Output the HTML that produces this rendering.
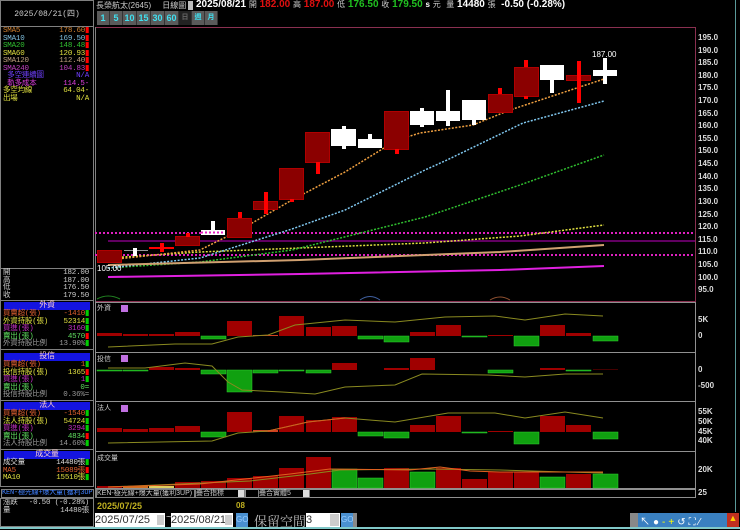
<!DOCTYPE html>
<html><head><meta charset="utf-8"><style>
*{margin:0;padding:0;box-sizing:border-box}
body{width:740px;height:529px;background:#000;overflow:hidden;position:relative;font-family:"Liberation Sans","Noto Sans CJK TC",sans-serif;color:#ddd}
.a{position:absolute;white-space:nowrap}
.lp{font-family:"Liberation Mono","Noto Sans CJK TC",monospace;font-size:7.5px;line-height:7.4px;letter-spacing:-0.2px}
.r{position:absolute;left:3px;width:88px;height:8px}
.r span:last-child{position:absolute;right:2px}
.hd{position:absolute;left:4px;width:86px;height:8px;background:#1414e0;color:#ffd0d0;text-align:center;font-size:8px;line-height:8px}
.box{position:absolute;border:1px solid #808080}
.btn{position:absolute;top:11px;height:14px;width:13px;background:#5a5a5a;color:#40e0f0;font-size:9px;font-weight:bold;text-align:center;line-height:14px;border-right:1px solid #333}
.ax{position:absolute;left:698px;font-size:8px;font-weight:bold;color:#ddd;font-family:"Liberation Sans",sans-serif}
</style></head><body>

<div class="box" style="left:0;top:0;width:94px;height:27px"></div>
<div class="a" style="left:0;top:8px;width:94px;text-align:center;font-size:8px;font-family:'Liberation Mono','Noto Sans CJK TC',monospace;color:#ccc">2025/08/21(四)</div>
<div class="box" style="left:0;top:26px;width:94px;height:243px"></div>
<div class="box" style="left:0;top:268px;width:94px;height:33px"></div>
<div class="box" style="left:0;top:300px;width:94px;height:50px"></div>
<div class="box" style="left:0;top:349px;width:94px;height:52px"></div>
<div class="box" style="left:0;top:400px;width:94px;height:50px"></div>
<div class="box" style="left:0;top:449px;width:94px;height:38px"></div>

<div class="lp">
<div class="r" style="top:28px;color:#d08030"><span>SMA5</span><span>178.60<b style="color:#f00">▮</b></span></div>
<div class="r" style="top:35.5px;color:#80c0e0"><span>SMA10</span><span>169.50<b style="color:#f00">▮</b></span></div>
<div class="r" style="top:43px;color:#30c030"><span>SMA20</span><span>148.48<b style="color:#f00">▮</b></span></div>
<div class="r" style="top:50.5px;color:#e0e040"><span>SMA60</span><span>120.93<b style="color:#f00">▮</b></span></div>
<div class="r" style="top:58px;color:#c0a080"><span>SMA120</span><span>112.40<b style="color:#f00">▮</b></span></div>
<div class="r" style="top:65.5px;color:#c040c0"><span>SMA240</span><span>104.83<b style="color:#f00">▮</b></span></div>
<div class="r" style="top:73px;color:#7040ff"><span>&nbsp;多空連續圖</span><span>N/A</span></div>
<div class="r" style="top:80.5px;color:#e040e0"><span>&nbsp;軌多成本</span><span>114.5-</span></div>
<div class="r" style="top:88px;color:#e0e040"><span>多空均線</span><span>64.04-</span></div>
<div class="r" style="top:95.5px;color:#e0e040"><span>出場</span><span>N/A</span></div>

<div class="r" style="top:270px;color:#ccc"><span>開</span><span>182.00</span></div>
<div class="r" style="top:277.5px;color:#ccc"><span>高</span><span>187.00</span></div>
<div class="r" style="top:285px;color:#ccc"><span>低</span><span>176.50</span></div>
<div class="r" style="top:292.5px;color:#ccc"><span>收</span><span>179.50</span></div>

<div class="hd" style="top:302px">外資</div>
<div class="r" style="top:311px;color:#e06030"><span>買賣超(張)</span><span>-1410<b style="color:#0c0">▮</b></span></div>
<div class="r" style="top:318.5px;color:#e0e040"><span>外資持股(張)</span><span>52314<b style="color:#0c0">▮</b></span></div>
<div class="r" style="top:326px;color:#c030c0"><span>買進(張)</span><span>3160<b style="color:#0c0">▮</b></span></div>
<div class="r" style="top:333.5px;color:#60e060"><span>賣出(張)</span><span>4570<b style="color:#f00">▮</b></span></div>
<div class="r" style="top:341px;color:#999"><span>外資持股比例</span><span>13.90%<b style="color:#0c0">▮</b></span></div>

<div class="hd" style="top:353px">投信</div>
<div class="r" style="top:362px;color:#e06030"><span>買賣超(張)</span><span>1<b style="color:#0c0">▮</b></span></div>
<div class="r" style="top:369.5px;color:#e0e040"><span>投信持股(張)</span><span>1365<b style="color:#f00">▮</b></span></div>
<div class="r" style="top:377px;color:#c030c0"><span>買進(張)</span><span>1<b style="color:#0c0">▮</b></span></div>
<div class="r" style="top:384.5px;color:#60e060"><span>賣出(張)</span><span>0=</span></div>
<div class="r" style="top:392px;color:#999"><span>投信持股比例</span><span>0.36%=</span></div>

<div class="hd" style="top:402px">法人</div>
<div class="r" style="top:411px;color:#e06030"><span>買賣超(張)</span><span>-1540<b style="color:#0c0">▮</b></span></div>
<div class="r" style="top:418.5px;color:#e0e040"><span>法人持股(張)</span><span>54724<b style="color:#0c0">▮</b></span></div>
<div class="r" style="top:426px;color:#c030c0"><span>買進(張)</span><span>3294<b style="color:#0c0">▮</b></span></div>
<div class="r" style="top:433.5px;color:#60e060"><span>賣出(張)</span><span>4834<b style="color:#f00">▮</b></span></div>
<div class="r" style="top:441px;color:#999"><span>法人持股比例</span><span>14.60%<b style="color:#0c0">▮</b></span></div>

<div class="hd" style="top:451px">成交量</div>
<div class="r" style="top:460px;color:#ddd"><span>成交量</span><span>14480張<b style="color:#0c0">▮</b></span></div>
<div class="r" style="top:467.5px;color:#e06030"><span>MA5</span><span>15089張<b style="color:#f00">▮</b></span></div>
<div class="r" style="top:475px;color:#e0e040"><span>MA10</span><span>15510張<b style="color:#0c0">▮</b></span></div>

<div class="a" style="left:1px;top:489px;width:93px;height:9px;border:1px solid #808080;color:#4080ff;font-size:7px;line-height:7px;overflow:hidden">KEN-極光線+爆大量(獲利3UP)</div>
<div class="r" style="top:500px;color:#ccc"><span>漲跌</span><span>-0.50 (-0.28%)</span></div>
<div class="r" style="top:507.5px;color:#ccc"><span>量</span><span>14480張</span></div>
</div>
<div class="box" style="left:0;top:498px;width:94px;height:29px"></div>

<div class="a" style="left:96px;top:0;font-size:8px;color:#ccc">長榮航太(2645) &nbsp;&nbsp;&nbsp;&nbsp;日線圖 <span style="background:#bbb;color:#bbb">▮</span></div>
<div class="a" style="left:196px;top:-1px;font-size:10px;font-weight:bold;color:#fff">2025/08/21 <span style="font-weight:normal;font-size:8px;color:#ccc">開</span> <span style="color:#e01010">182.00</span> <span style="font-weight:normal;font-size:8px;color:#ccc">高</span> <span style="color:#e01010">187.00</span> <span style="font-weight:normal;font-size:8px;color:#ccc">低</span> <span style="color:#20c020">176.50</span> <span style="font-weight:normal;font-size:8px;color:#ccc">收</span> <span style="color:#20c020">179.50</span> <span style="font-size:8px">s</span> <span style="font-weight:normal;font-size:8px;color:#ccc">元</span> &nbsp;<span style="font-weight:normal;font-size:8px;color:#ccc">量</span> 14480 <span style="font-weight:normal;font-size:8px;color:#ccc">張</span> &nbsp;-0.50 (-0.28%)</div>
<div class="btn" style="left:97px">1</div>
<div class="btn" style="left:110px">5</div>
<div class="btn" style="left:123px;width:14px">10</div>
<div class="btn" style="left:137px;width:14px">15</div>
<div class="btn" style="left:151px;width:14px">30</div>
<div class="btn" style="left:165px;width:14px">60</div>
<div class="btn" style="left:179px;background:#222;color:#666;font-size:7px">日</div>
<div class="btn" style="left:192px;font-size:7px">週</div>
<div class="btn" style="left:205px;font-size:7px">月</div>

<svg class="a" style="left:0;top:0" width="740" height="529" xmlns="http://www.w3.org/2000/svg">
<rect x="95.5" y="27.5" width="600" height="274" fill="none" stroke="#8a3050"/>
<line x1="95.5" y1="27" x2="95.5" y2="498" stroke="#808080"/>
<g stroke="#909090" fill="none">
<rect x="95.5" y="302.5" width="600" height="50"/>
<rect x="95.5" y="352.5" width="600" height="49"/>
<rect x="95.5" y="401.5" width="600" height="50"/>
<rect x="95.5" y="451.5" width="600" height="37"/>
<rect x="245.5" y="489.5" width="450" height="8"/>
</g>
<line x1="735.5" y1="0" x2="735.5" y2="512" stroke="#5a9a9a"/>
<line x1="95" y1="233" x2="695" y2="233" stroke="#e020c0" stroke-width="2" stroke-dasharray="2,2"/>
<line x1="95" y1="255" x2="695" y2="255" stroke="#e020c0" stroke-width="2" stroke-dasharray="2,2"/>
<line x1="108" y1="241" x2="695" y2="241" stroke="#800080" stroke-width="1.5"/>
<polyline fill="none" stroke="#e0e040" stroke-width="1.5" stroke-dasharray="2,1.5" points="108,258 200,252 300,248 425,243 520,236 604,225"/>
<polyline fill="none" stroke="#30c030" stroke-width="1.5" stroke-dasharray="2,1.5" points="108,268 200,262 292,250 425,217 520,185 604,155"/>
<polyline fill="none" stroke="#80c8f0" stroke-width="1.5" stroke-dasharray="2,1.5" points="108,268 200,258 292,229 345,210 425,170 447,160 523,123 604,101"/>
<polyline fill="none" stroke="#f0a040" stroke-width="1.5" stroke-dasharray="2,1.5" points="108,260 200,250 240,230 292,200 345,172 397,140 420,133 473,125 510,110 604,79"/>
<polyline fill="none" stroke="#d0a070" stroke-width="2" points="108,265 300,260 500,252 604,245"/>
<polyline fill="none" stroke="#e020e0" stroke-width="2" points="108,277 300,274 500,270 604,266"/>
<g fill="#8b0000" stroke="#b00000">
<rect x="97.5" y="250.5" width="24" height="12"/>
<rect x="175.5" y="236.5" width="24" height="9"/>
<rect x="227.5" y="218.5" width="24" height="19"/>
<rect x="253.5" y="201.5" width="24" height="8"/>
<rect x="279.5" y="168.5" width="24" height="31"/>
<rect x="305.5" y="132.5" width="24" height="30"/>
<rect x="384.5" y="111.5" width="24" height="38"/>
<rect x="488.5" y="94.5" width="24" height="18"/>
<rect x="514.5" y="67.5" width="24" height="29"/>
<rect x="566.5" y="75.5" width="24" height="5"/>
</g>
<g fill="#f00">
<rect x="160" y="243" width="4" height="9"/><rect x="149" y="247" width="25" height="2"/>
<rect x="186" y="233" width="4" height="4"/>
<rect x="238" y="212" width="4" height="6"/>
<rect x="264" y="192" width="4" height="22"/>
<rect x="290" y="199" width="4" height="3"/>
<rect x="316" y="162" width="4" height="12"/>
<rect x="395" y="149" width="4" height="5"/>
<rect x="498" y="88" width="4" height="6"/>
<rect x="524" y="60" width="4" height="7"/><rect x="524" y="96" width="4" height="3"/>
<rect x="577" y="61" width="4" height="42"/>
</g>
<g fill="#fff">
<rect x="124" y="250" width="24" height="1" fill="#999"/><rect x="133" y="248" width="4" height="8"/>
<rect x="201" y="230" width="24" height="5"/><rect x="211" y="221" width="4" height="9"/>
<rect x="331" y="129" width="25" height="17"/><rect x="342" y="126" width="4" height="23"/>
<rect x="358" y="139" width="24" height="9"/><rect x="368" y="134" width="4" height="5"/>
<rect x="410" y="111" width="24" height="14"/><rect x="420" y="108" width="4" height="19"/>
<rect x="436" y="111" width="24" height="10"/><rect x="446" y="90" width="4" height="36"/>
<rect x="462" y="100" width="24" height="20"/><rect x="472" y="120" width="4" height="5"/>
<rect x="540" y="65" width="24" height="15"/><rect x="550" y="80" width="4" height="13"/>
<rect x="593" y="70" width="24" height="6"/><rect x="603" y="58" width="4" height="26"/>
</g>
<line x1="201" y1="232.5" x2="225" y2="232.5" stroke="#e020c0" stroke-width="2" stroke-dasharray="2,2"/>
<text x="592" y="57" font-size="8" fill="#fff" font-family="Liberation Sans">187.00</text>
<text x="97" y="271" font-size="8" fill="#fff" font-family="Liberation Sans">105.00</text>

<g fill="#a00000"><rect x="97" y="333" width="25" height="3"/><rect x="123" y="334" width="25" height="2"/><rect x="149" y="334" width="25" height="2"/><rect x="175" y="332" width="25" height="4"/><rect x="227" y="321" width="25" height="15"/><rect x="253" y="335" width="25" height="1" fill="#d04020"/><rect x="279" y="316" width="25" height="20"/><rect x="306" y="327" width="25" height="9"/><rect x="332" y="326" width="25" height="10"/><rect x="410" y="332" width="25" height="4"/><rect x="436" y="325" width="25" height="11"/><rect x="488" y="335" width="25" height="1"/><rect x="540" y="325" width="25" height="11"/><rect x="566" y="333" width="25" height="3"/></g>
<g fill="#10a010" stroke="#30d030" stroke-width=".5"><rect x="201" y="336" width="25" height="3"/><rect x="358" y="336" width="25" height="3"/><rect x="384" y="336" width="25" height="6"/><rect x="462" y="336" width="25" height="1"/><rect x="514" y="336" width="25" height="10"/><rect x="593" y="336" width="25" height="5"/></g>
<polyline fill="none" stroke="#8a8a20" points="108,347 175,344 212,344 238,337 268,335 295,325 345,320 395,322 445,317 495,316 525,320 565,314 603,316"/>
<g fill="#a00000"><rect x="149" y="367" width="25" height="3"/><rect x="175" y="368" width="25" height="2"/><rect x="332" y="363" width="25" height="7"/><rect x="384" y="368" width="25" height="2"/><rect x="410" y="358" width="25" height="12"/><rect x="540" y="368" width="25" height="2"/><rect x="593" y="369" width="25" height="1" fill="#400"/></g>
<g fill="#10a010" stroke="#30d030" stroke-width=".5"><rect x="97" y="370" width="25" height="1"/><rect x="123" y="370" width="25" height="1"/><rect x="201" y="370" width="25" height="4"/><rect x="227" y="370" width="25" height="22"/><rect x="253" y="370" width="25" height="3"/><rect x="279" y="370" width="25" height="1"/><rect x="306" y="370" width="25" height="3"/><rect x="488" y="370" width="25" height="3"/><rect x="566" y="370" width="25" height="1"/></g>
<polyline fill="none" stroke="#8a8a20" points="108,368 145,368 185,363 212,366 228,382 242,390 282,392 315,394 345,387 395,385 422,374 488,375 525,377 565,374 603,374"/>
<g fill="#a00000"><rect x="97" y="428" width="25" height="4"/><rect x="123" y="429" width="25" height="3"/><rect x="149" y="428" width="25" height="4"/><rect x="175" y="426" width="25" height="6"/><rect x="227" y="412" width="25" height="20"/><rect x="253" y="430" width="25" height="2" fill="#d04020"/><rect x="279" y="416" width="25" height="16"/><rect x="306" y="420" width="25" height="12"/><rect x="332" y="417" width="25" height="15"/><rect x="410" y="425" width="25" height="7"/><rect x="436" y="416" width="25" height="16"/><rect x="488" y="431" width="25" height="1"/><rect x="540" y="416" width="25" height="16"/><rect x="566" y="425" width="25" height="7"/></g>
<g fill="#10a010" stroke="#30d030" stroke-width=".5"><rect x="201" y="432" width="25" height="5"/><rect x="358" y="432" width="25" height="4"/><rect x="384" y="432" width="25" height="6"/><rect x="462" y="432" width="25" height="1"/><rect x="514" y="432" width="25" height="12"/><rect x="593" y="432" width="25" height="7"/></g>
<polyline fill="none" stroke="#8a8a20" points="108,443 212,441 238,433 268,431 308,422 345,418 395,422 448,413 495,413 525,418 565,412 603,418"/>
<polyline fill="none" stroke="#d06020" points="268,431 308,422 345,418"/>
<g fill="#a00000"><rect x="97" y="486" width="25" height="2"/><rect x="123" y="486" width="25" height="2" fill="#d07020"/><rect x="149" y="486" width="25" height="2" fill="#e0d060"/><rect x="175" y="482" width="25" height="6"/><rect x="201" y="481" width="25" height="7"/><rect x="227" y="478" width="25" height="10"/><rect x="253" y="476" width="25" height="12"/><rect x="279" y="468" width="25" height="20"/><rect x="306" y="457" width="25" height="31"/><rect x="384" y="468" width="25" height="20"/><rect x="436" y="468" width="25" height="20"/><rect x="462" y="479" width="25" height="9"/><rect x="488" y="472" width="25" height="16"/><rect x="514" y="472" width="25" height="16"/><rect x="566" y="474" width="25" height="14"/></g>
<g fill="#10a010" stroke="#30d030" stroke-width=".5"><rect x="332" y="469" width="25" height="19"/><rect x="358" y="478" width="25" height="10"/><rect x="410" y="472" width="25" height="16"/><rect x="540" y="477" width="25" height="11"/><rect x="593" y="474" width="25" height="14"/></g>
<polyline fill="none" stroke="#8a8a20" points="108,487 250,481 310,474 340,470 430,469 500,470 565,472 603,473"/>
<polyline fill="none" stroke="#e06020" points="108,487 200,484 290,474 330,469 410,470 440,467 470,471 500,472 603,472"/>
<path d="M97 299 Q108 293 120 299" stroke="#208020" fill="none"/>
<path d="M360 300 Q370 293 380 300" stroke="#4060a0" fill="none"/>
<path d="M490 300 Q500 294 510 300" stroke="#905030" fill="none"/>
<g fill="#c070e0"><rect x="121" y="305" width="7" height="7"/><rect x="121" y="355" width="7" height="7"/><rect x="121" y="405" width="7" height="7"/></g>
</svg>

<div class="a" style="left:97px;top:303px;font-size:7px;color:#ccc">外資</div>
<div class="a" style="left:97px;top:354px;font-size:7px;color:#ccc">投信</div>
<div class="a" style="left:97px;top:403px;font-size:7px;color:#ccc">法人</div>
<div class="a" style="left:97px;top:453px;font-size:7px;color:#ccc">成交量</div>

<div class="ax" style="top:33px">195.0</div><div class="ax" style="top:46px">190.0</div><div class="ax" style="top:58px">185.0</div><div class="ax" style="top:71px">180.0</div><div class="ax" style="top:83px">175.0</div><div class="ax" style="top:96px">170.0</div><div class="ax" style="top:109px">165.0</div><div class="ax" style="top:121px">160.0</div><div class="ax" style="top:134px">155.0</div><div class="ax" style="top:146px">150.0</div><div class="ax" style="top:159px">145.0</div><div class="ax" style="top:172px">140.0</div><div class="ax" style="top:184px">135.0</div><div class="ax" style="top:197px">130.0</div><div class="ax" style="top:210px">125.0</div><div class="ax" style="top:222px">120.0</div><div class="ax" style="top:235px">115.0</div><div class="ax" style="top:247px">110.0</div><div class="ax" style="top:260px">105.0</div><div class="ax" style="top:273px">100.0</div><div class="ax" style="top:285px">95.0</div>
<div class="ax" style="top:315px">5K</div><div class="ax" style="top:331px">0</div>
<div class="ax" style="top:365px">0</div><div class="ax" style="top:381px">-500</div>
<div class="ax" style="top:407px">55K</div><div class="ax" style="top:417px">50K</div><div class="ax" style="top:427px">45K</div><div class="ax" style="top:436px">40K</div>
<div class="ax" style="top:465px">20K</div><div class="ax" style="top:488px">25</div>

<div class="a" style="left:96px;top:489px;width:99px;height:9px;border:1px solid #808080;font-size:7px;line-height:7px;color:#ccc;overflow:hidden">KEN-極光線+爆大量(獲利3UP)</div>
<div class="a" style="left:195px;top:489px;width:50px;height:9px;border:1px solid #808080;font-size:7px;line-height:7px;color:#ccc">疊合指標<span style="position:absolute;right:0;top:0;width:6px;height:7px;background:#ddd"></span></div>
<div class="a" style="left:258px;top:489px;width:52px;height:9px;border:1px solid #808080;font-size:7px;line-height:7px;color:#ccc">疊合實體5<span style="position:absolute;right:0;top:0;width:6px;height:7px;background:#ddd"></span></div>
<div class="a" style="left:97px;top:501px;font-size:9px;font-weight:bold;color:#c0b020">2025/07/25</div>
<div class="a" style="left:236px;top:501px;font-size:8px;font-weight:bold;color:#c0b020">08</div>
<div class="a" style="left:95px;top:513px;width:70px;height:14px;background:#fff;color:#333;font-size:11px;line-height:14px">2025/07/25<span style="position:absolute;right:1px;top:2px;width:7px;height:10px;background:#ccc"></span></div>
<div class="a" style="left:166px;top:512px;font-size:10px;color:#ccc">~</div>
<div class="a" style="left:171px;top:513px;width:62px;height:14px;background:#fff;color:#333;font-size:11px;line-height:14px">2025/08/21<span style="position:absolute;right:1px;top:2px;width:7px;height:10px;background:#ccc"></span></div>
<div class="a" style="left:236px;top:513px;width:12px;height:14px;background:#4a90d0;color:#9cf;font-size:8px;line-height:14px">GO</div>
<div class="a" style="left:254px;top:511px;font-size:13px;color:#bbb;font-family:'Noto Serif CJK SC',serif">保留空間</div>
<div class="a" style="left:306px;top:513px;width:34px;height:14px;background:#fff;color:#333;font-size:11px;line-height:14px">3<span style="position:absolute;right:1px;top:1px;width:9px;height:12px;background:#ccc"></span></div>
<div class="a" style="left:341px;top:513px;width:12px;height:14px;background:#4a90d0;color:#9cf;font-size:8px;line-height:14px">GO</div>
<div class="a" style="left:353px;top:513px;width:4px;height:14px;background:#888"></div>
<div class="a" style="left:630px;top:513px;width:8px;height:14px;background:#888"></div>
<div class="a" style="left:638px;top:513px;width:90px;height:14px;background:#3a80c0"></div>
<div class="a" style="left:640px;top:513px;font-size:10px;color:#fff;letter-spacing:3px">↖<span style="color:#fff">●</span><span style="color:#ff0">-+</span>↺⛶⁄</div>
<div class="a" style="left:727px;top:513px;width:12px;height:14px;background:#c03020;color:#fc0;font-size:9px;text-align:center">▲</div>
<div class="a" style="left:0;top:527px;width:740px;height:2px;background:#80c8c8"></div>
</body></html>
